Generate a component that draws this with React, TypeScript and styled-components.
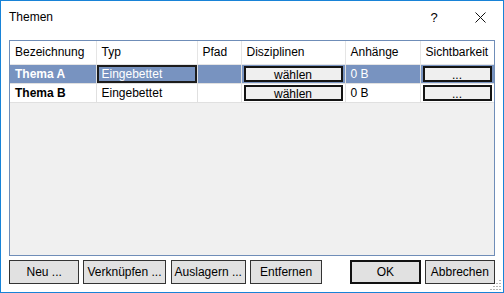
import React from "react"
import styled, { createGlobalStyle } from "styled-components"

const GlobalStyle = createGlobalStyle`
  html, body { margin: 0; padding: 0; background: #fff; }
  body { font-family: "Segoe UI", "Liberation Sans", Arial, sans-serif; font-size: 12px; color: #000; }
`

// window chrome
const Window = styled.div`
  box-sizing: border-box;
  width: 504px;
  height: 293px;
  border: 1px solid #1883d7;
  background: #fff;
  display: flex;
  flex-direction: column;
  position: relative;
`
const TitleBar = styled.div`
  height: 30px;
  display: flex;
  align-items: center;
  padding-left: 8px;
  padding-top: 1px;
`
const Title = styled.div`
  flex: 1;
  font-size: 12px;
`
const TitleBtn = styled.div<{ $w: number }>`
  width: ${(p) => p.$w}px;
  height: 30px;
  display: flex;
  align-items: center;
  justify-content: center;
  font-size: 13px;
`
const Body = styled.div`
  flex: 1;
  display: flex;
  flex-direction: column;
  padding: 8px 8px 9px 8px;
  gap: 4px;
`

// grid
const Grid = styled.div`
  box-sizing: border-box;
  width: 486px;
  height: 216px;
  border: 1px solid #6f8db8;
  background: #f0f0f0;
  overflow: hidden;
`
const Table = styled.table`
  border-collapse: collapse;
  table-layout: fixed;
  width: 484px;
`
const Head = styled.th`
  box-sizing: border-box;
  height: 23px;
  padding: 0 0 0 5px;
  text-align: left;
  font-weight: normal;
  background: #fff;
  border-right: 1px solid #e5e5e5;
  border-bottom: 1px solid #e5e5e5;
  white-space: nowrap;
  overflow: hidden;
`
const Row = styled.tr<{ $selected?: boolean }>`
  background: ${(p) => (p.$selected ? "#7893c0" : "#fff")};
  color: ${(p) => (p.$selected ? "#fff" : "#000")};
`
const Cell = styled.td<{ $bold?: boolean; $focus?: boolean }>`
  box-sizing: border-box;
  height: 19px;
  padding: 0 0 0 5px;
  border-right: 1px solid #e0e0e0;
  border-bottom: 1px solid #e0e0e0;
  font-weight: ${(p) => (p.$bold ? "bold" : "normal")};
  box-shadow: ${(p) => (p.$focus ? "inset 0 0 0 2px #1c1c1c" : "none")};
  white-space: nowrap;
  overflow: hidden;
`
const BtnCell = styled.td`
  box-sizing: border-box;
  height: 19px;
  padding: 1px 2px 0 2px;
  border-right: 1px solid #e0e0e0;
  border-bottom: 1px solid #e0e0e0;
`
const CellButton = styled.div`
  box-sizing: border-box;
  height: 16px;
  border: 2px solid #141414;
  background: #efefef;
  color: #000;
  text-align: center;
  line-height: 14px;
  font-size: 12px;
  overflow: hidden;
`

// footer buttons
const Footer = styled.div`
  display: flex;
  align-items: center;
  height: 24px;
`
const Button = styled.div<{ $w: number; $gap?: number; $default?: boolean }>`
  box-sizing: border-box;
  width: ${(p) => p.$w}px;
  height: 24px;
  margin-left: ${(p) => p.$gap ?? 0}px;
  border: ${(p) => (p.$default ? "2px solid #111" : "1px solid #333")};
  background: #e1e1e1;
  display: flex;
  align-items: center;
  justify-content: center;
  font-size: 12px;
  color: #000;
`
const Grip = styled.svg`
  position: absolute;
  right: 1px;
  bottom: 1px;
`

const columns = [
  { name: "Bezeichnung", w: 86 },
  { name: "Typ", w: 101 },
  { name: "Pfad", w: 44 },
  { name: "Disziplinen", w: 104 },
  { name: "Anhänge", w: 75 },
  { name: "Sichtbarkeit", w: 74 },
]

const rows = [
  { name: "Thema A", typ: "Eingebettet", size: "0 B", selected: true },
  { name: "Thema B", typ: "Eingebettet", size: "0 B", selected: false },
]

export default function App() {
  return (
    <>
      <GlobalStyle />
      <Window>
        <TitleBar>
          <Title>Themen</Title>
          <TitleBtn $w={46}>?</TitleBtn>
          <TitleBtn $w={46}>
            <svg width="11" height="11" viewBox="0 0 11 11">
              <path d="M0.5 0.5 L10.5 10.5 M10.5 0.5 L0.5 10.5" stroke="#111" strokeWidth="1" />
            </svg>
          </TitleBtn>
        </TitleBar>
        <Body>
          <Grid>
            <Table>
              <colgroup>
                {columns.map((c) => (
                  <col key={c.name} style={{ width: c.w }} />
                ))}
              </colgroup>
              <thead>
                <tr>
                  {columns.map((c) => (
                    <Head key={c.name}>{c.name}</Head>
                  ))}
                </tr>
              </thead>
              <tbody>
                {rows.map((r) => (
                  <Row key={r.name} $selected={r.selected}>
                    <Cell $bold>{r.name}</Cell>
                    <Cell $focus={r.selected}>{r.typ}</Cell>
                    <Cell />
                    <BtnCell><CellButton>wählen</CellButton></BtnCell>
                    <Cell>{r.size}</Cell>
                    <BtnCell><CellButton>...</CellButton></BtnCell>
                  </Row>
                ))}
              </tbody>
            </Table>
          </Grid>
          <Footer>
            <Button $w={71}>Neu ...</Button>
            <Button $w={83} $gap={4}>Verknüpfen ...</Button>
            <Button $w={76} $gap={5}>Auslagern ...</Button>
            <Button $w={73} $gap={4}>Entfernen</Button>
            <Button $w={71} $gap={28} $default>OK</Button>
            <Button $w={71} $gap={4}>Abbrechen</Button>
          </Footer>
        </Body>
        <Grip width="12" height="12" viewBox="0 0 12 12">
          {[[9, 1], [9, 4], [6, 4], [9, 7], [6, 7], [3, 7], [9, 10], [6, 10], [3, 10], [0, 10]].map(([x, y], i) => (
            <rect key={i} x={x} y={y} width="2" height="1" fill="#b4b4b4" />
          ))}
        </Grip>
      </Window>
    </>
  )
}
